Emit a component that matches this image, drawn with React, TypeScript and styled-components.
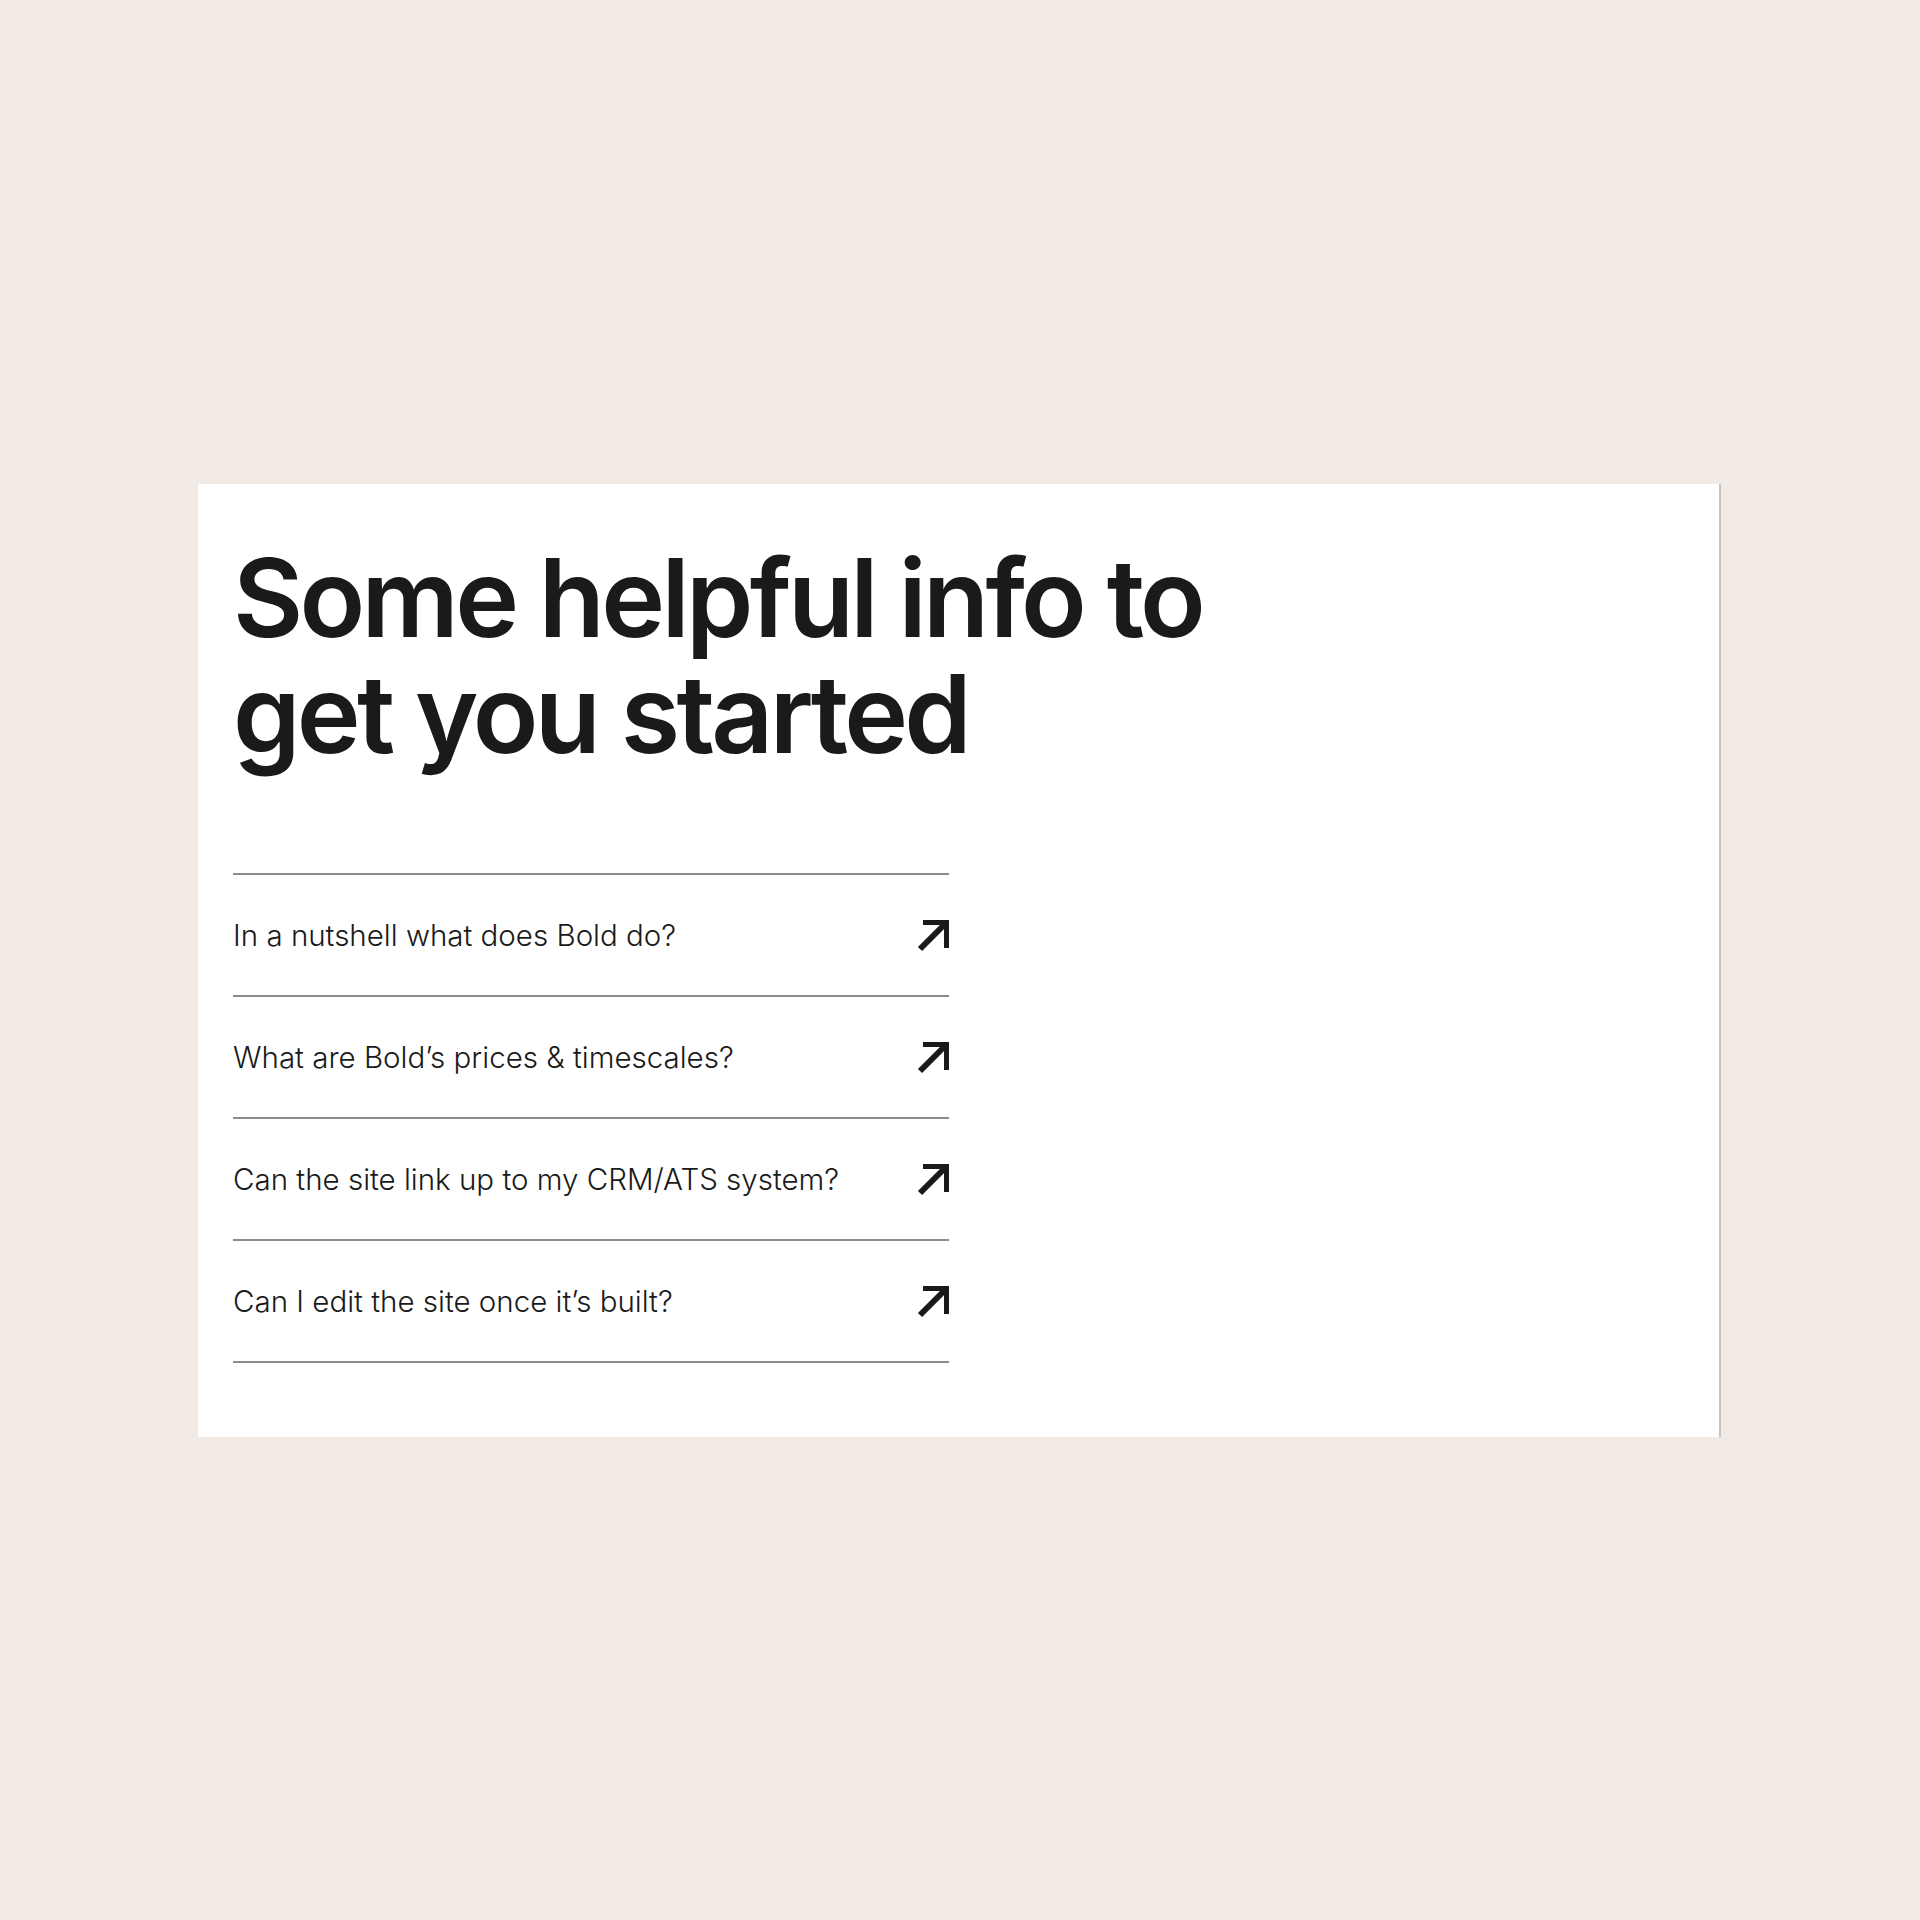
import React from "react";
import styled, { createGlobalStyle } from "styled-components";

const GlobalStyle = createGlobalStyle`
  html, body {
    margin: 0;
    padding: 0;
    background: #f2eae4;
  }
  body {
    font-family: Inter, "Noto Sans", Arial, sans-serif;
    color: #1a1a1a;
  }
`;

const Page = styled.div`
  min-height: 1920px;
  padding: 484px 0 0 198px;
  box-sizing: border-box;
`;

const Card = styled.section`
  width: 1523px;
  box-sizing: border-box;
  background: #ffffff;
  border-right: 2px solid #c4c4c4;
  padding: 56px 0 74px 35px;
`;

const Heading = styled.h1`
  margin: 0;
  font-family: Inter, "Noto Sans", Arial, sans-serif;
  font-size: 108px;
  line-height: 116px;
  font-weight: 600;
  letter-spacing: -3.7px;
  color: #1a1a1a;
`;

const List = styled.ul`
  list-style: none;
  margin: 101px 0 0;
  padding: 0;
  width: 716px;
  border-bottom: 2px solid #8c8c8c;
`;

const Row = styled.li`
  display: flex;
  align-items: center;
  justify-content: space-between;
  height: 120px;
  border-top: 2px solid #8c8c8c;
`;

const Question = styled.span`
  font-family: Inter, "Noto Sans", Arial, sans-serif;
  font-size: 29.5px;
  font-weight: 300;
  letter-spacing: 0;
  color: #1a1a1a;
`;

const ArrowBox = styled.span`
  display: flex;
  width: 32px;
  height: 32px;
  margin-top: 2px;
`;

const Arrow = () => (
  <ArrowBox>
    <svg width="32" height="32" viewBox="0 0 32 32" fill="none">
      <path d="M3 29 L28 4" stroke="#1a1a1a" strokeWidth="6" />
      <path d="M6 2.5 H29.5 V28" stroke="#1a1a1a" strokeWidth="5" />
    </svg>
  </ArrowBox>
);

const questions = [
  "In a nutshell what does Bold do?",
  "What are Bold’s prices & timescales?",
  "Can the site link up to my CRM/ATS system?",
  "Can I edit the site once it’s built?",
];

export default function App() {
  return (
    <>
      <GlobalStyle />
      <Page>
        <Card>
          <Heading>
            Some helpful info to
            <br />
            get you started
          </Heading>
          <List>
            {questions.map((q) => (
              <Row key={q}>
                <Question>{q}</Question>
                <Arrow />
              </Row>
            ))}
          </List>
        </Card>
      </Page>
    </>
  );
}
